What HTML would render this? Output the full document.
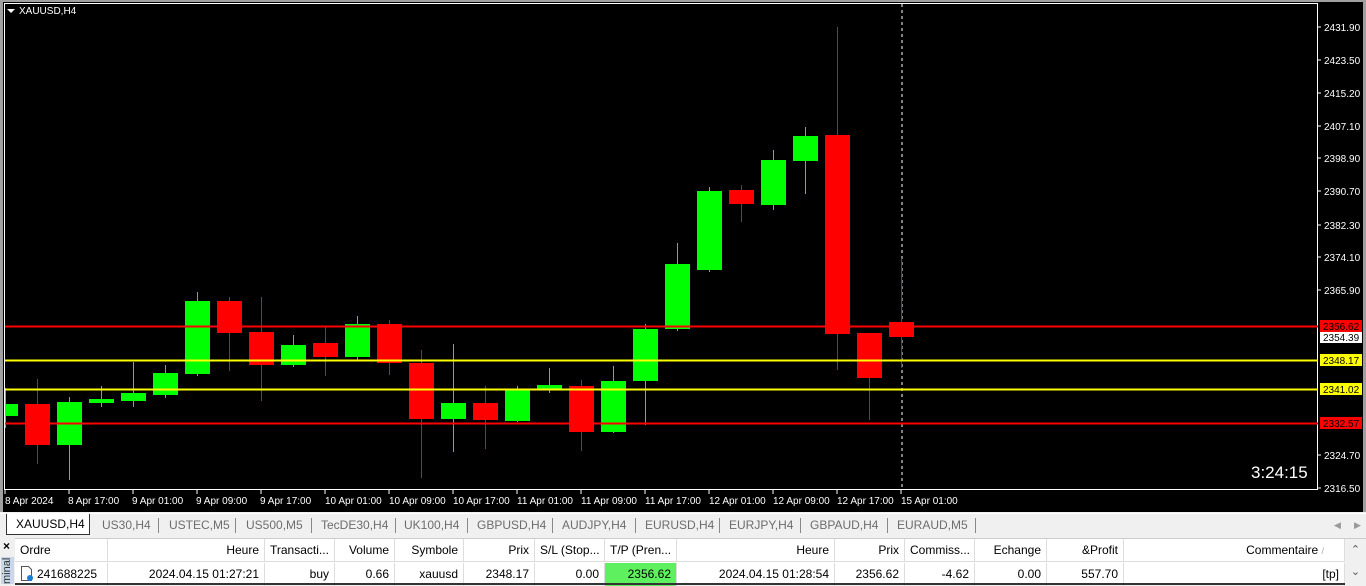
<!DOCTYPE html>
<html><head><meta charset="utf-8"><style>
*{margin:0;padding:0;box-sizing:border-box}
body{width:1366px;height:584px;overflow:hidden;background:#f0f0f0;font-family:"Liberation Sans",sans-serif;position:relative}
#chart{position:absolute;left:0;top:0;width:1366px;height:512px;background:#000;border-left:3px solid #a0a0a0;border-top:2px solid #a0a0a0;border-right:3px solid #a0a0a0}
svg text{font-family:"Liberation Sans",sans-serif}
#tabs{position:absolute;left:0;top:513px;width:1366px;height:24px;background:#f0f0f0;border-top:1px solid #fff;font-size:12px;color:#6d6d6d}
.tab{position:absolute;top:4px}
.sep{position:absolute;top:4px;width:1px;height:15px;background:#888}
#tbl{position:absolute;left:15px;top:538px;width:1351px;height:46px;background:#fff;border-top:1px solid #ccc;font-size:12px;color:#000}
.c{position:absolute;height:23px;line-height:23px;padding:0 5px;white-space:nowrap;overflow:hidden}
.h{top:0;border-right:1px solid #ddd;border-bottom:1px solid #ddd}
.r{top:24px;border-right:1px solid #ddd}
</style></head><body>
<div id="chart"></div>
<svg style="position:absolute;left:0;top:0" width="1366" height="512">
<rect x="4.5" y="3.5" width="1313" height="486" fill="none" stroke="#fff" stroke-width="1"/>
<polygon points="7,9 15,9 11,13" fill="#fff"/>
<text x="19" y="14" fill="#fff" font-size="10">XAUUSD,H4</text>
<g fill="#fff" font-size="10">
<text x="1324" y="31">2431.90</text><text x="1324" y="64">2423.50</text><text x="1324" y="97">2415.20</text><text x="1324" y="130">2407.10</text><text x="1324" y="162">2398.90</text><text x="1324" y="195">2390.70</text><text x="1324" y="229">2382.30</text><text x="1324" y="261">2374.10</text><text x="1324" y="294">2365.90</text><text x="1324" y="459">2324.70</text><text x="1324" y="492">2316.50</text>
</g>
<g stroke="#fff"><line x1="1318" y1="27" x2="1321" y2="27"/><line x1="1318" y1="60" x2="1321" y2="60"/><line x1="1318" y1="93" x2="1321" y2="93"/><line x1="1318" y1="126" x2="1321" y2="126"/><line x1="1318" y1="158" x2="1321" y2="158"/><line x1="1318" y1="191" x2="1321" y2="191"/><line x1="1318" y1="225" x2="1321" y2="225"/><line x1="1318" y1="257" x2="1321" y2="257"/><line x1="1318" y1="290" x2="1321" y2="290"/><line x1="1318" y1="455" x2="1321" y2="455"/><line x1="1318" y1="488" x2="1321" y2="488"/></g>
<line x1="902" y1="4" x2="902" y2="490" stroke="#fff" stroke-dasharray="3,3"/>
<g fill="#00ff00" stroke="#00ff00">
<line x1="5.5" y1="388" x2="5.5" y2="428"/><rect x="5" y="404" width="13" height="12" stroke="none"/>
<line x1="69.5" y1="397" x2="69.5" y2="480"/><rect x="57" y="402" width="25" height="43" stroke="none"/>
<line x1="101.5" y1="386" x2="101.5" y2="407"/><rect x="89" y="399" width="25" height="4" stroke="none"/>
<line x1="133.5" y1="362" x2="133.5" y2="407"/><rect x="121" y="393" width="25" height="8" stroke="none"/>
<line x1="165.5" y1="365" x2="165.5" y2="398"/><rect x="153" y="373" width="25" height="22" stroke="none"/>
<line x1="197.5" y1="292" x2="197.5" y2="376"/><rect x="185" y="301" width="25" height="73" stroke="none"/>
<line x1="293.5" y1="335" x2="293.5" y2="367"/><rect x="281" y="345" width="25" height="20" stroke="none"/>
<line x1="357.5" y1="316" x2="357.5" y2="360"/><rect x="345" y="324" width="25" height="33" stroke="none"/>
<line x1="453.5" y1="344" x2="453.5" y2="452"/><rect x="441" y="403" width="25" height="16" stroke="none"/>
<line x1="517.5" y1="386" x2="517.5" y2="422"/><rect x="505" y="389" width="25" height="32" stroke="none"/>
<line x1="549.5" y1="368" x2="549.5" y2="393"/><rect x="537" y="385" width="25" height="5" stroke="none"/>
<line x1="613.5" y1="366" x2="613.5" y2="433"/><rect x="601" y="381" width="25" height="51" stroke="none"/>
<line x1="645.5" y1="324" x2="645.5" y2="425"/><rect x="633" y="329" width="25" height="52" stroke="none"/>
<line x1="677.5" y1="243" x2="677.5" y2="331"/><rect x="665" y="264" width="25" height="65" stroke="none"/>
<line x1="709.5" y1="187" x2="709.5" y2="272"/><rect x="697" y="191" width="25" height="79" stroke="none"/>
<line x1="773.5" y1="150" x2="773.5" y2="210"/><rect x="761" y="160" width="25" height="45" stroke="none"/>
<line x1="805.5" y1="127" x2="805.5" y2="194"/><rect x="793" y="136" width="25" height="25" stroke="none"/>
</g>
<g fill="#ff0000" stroke="#ff0000">
<line x1="37.5" y1="379" x2="37.5" y2="464"/><rect x="25" y="404" width="25" height="41" stroke="none"/>
<line x1="229.5" y1="297" x2="229.5" y2="371"/><rect x="217" y="301" width="25" height="32" stroke="none"/>
<line x1="261.5" y1="297" x2="261.5" y2="401"/><rect x="249" y="332" width="25" height="33" stroke="none"/>
<line x1="325.5" y1="327" x2="325.5" y2="376"/><rect x="313" y="343" width="25" height="14" stroke="none"/>
<line x1="389.5" y1="320" x2="389.5" y2="375"/><rect x="377" y="324" width="25" height="39" stroke="none"/>
<line x1="421.5" y1="350" x2="421.5" y2="478"/><rect x="409" y="363" width="25" height="56" stroke="none"/>
<line x1="485.5" y1="386" x2="485.5" y2="449"/><rect x="473" y="403" width="25" height="17" stroke="none"/>
<line x1="581.5" y1="380" x2="581.5" y2="451"/><rect x="569" y="386" width="25" height="46" stroke="none"/>
<line x1="741.5" y1="185" x2="741.5" y2="222"/><rect x="729" y="190" width="25" height="14" stroke="none"/>
<line x1="837.5" y1="27" x2="837.5" y2="370"/><rect x="825" y="135" width="25" height="199" stroke="none"/>
<line x1="869.5" y1="333" x2="869.5" y2="420"/><rect x="857" y="333" width="25" height="45" stroke="none"/>
<line x1="901.5" y1="258" x2="901.5" y2="368"/><rect x="889" y="322" width="25" height="15" stroke="none"/>
</g>
<line x1="5" y1="326.5" x2="1318" y2="326.5" stroke="#ff0000" stroke-width="2"/>
<line x1="5" y1="360.5" x2="1318" y2="360.5" stroke="#ffff00" stroke-width="2"/>
<line x1="5" y1="389.5" x2="1318" y2="389.5" stroke="#ffff00" stroke-width="2"/>
<line x1="5" y1="423.5" x2="1318" y2="423.5" stroke="#ff0000" stroke-width="2"/>
<rect x="1320" y="320" width="42" height="12" fill="#ff0000"/><text x="1323" y="330" fill="#000" font-size="10">2356.62</text>
<rect x="1320" y="332" width="42" height="11" fill="#fff"/><text x="1323" y="341" fill="#000" font-size="10">2354.39</text>
<rect x="1320" y="354" width="42" height="12" fill="#ffff00"/><text x="1323" y="364" fill="#000" font-size="10">2348.17</text>
<rect x="1320" y="383" width="42" height="12" fill="#ffff00"/><text x="1323" y="393" fill="#000" font-size="10">2341.02</text>
<rect x="1320" y="417" width="42" height="12" fill="#ff0000"/><text x="1323" y="427" fill="#000" font-size="10">2332.57</text>
<text x="1251" y="478" fill="#fff" font-size="17">3:24:15</text>
<g fill="#fff" font-size="10">
<text x="5" y="504">8 Apr 2024</text><text x="68" y="504">8 Apr 17:00</text><text x="132" y="504">9 Apr 01:00</text><text x="196" y="504">9 Apr 09:00</text><text x="260" y="504">9 Apr 17:00</text><text x="325" y="504">10 Apr 01:00</text><text x="389" y="504">10 Apr 09:00</text><text x="453" y="504">10 Apr 17:00</text><text x="517" y="504">11 Apr 01:00</text><text x="581" y="504">11 Apr 09:00</text><text x="645" y="504">11 Apr 17:00</text><text x="709" y="504">12 Apr 01:00</text><text x="773" y="504">12 Apr 09:00</text><text x="837" y="504">12 Apr 17:00</text><text x="901" y="504">15 Apr 01:00</text>
</g>
<g stroke="#fff"><line x1="5" y1="490" x2="5" y2="494"/><line x1="69" y1="490" x2="69" y2="494"/><line x1="133" y1="490" x2="133" y2="494"/><line x1="197" y1="490" x2="197" y2="494"/><line x1="261" y1="490" x2="261" y2="494"/><line x1="325" y1="490" x2="325" y2="494"/><line x1="389" y1="490" x2="389" y2="494"/><line x1="453" y1="490" x2="453" y2="494"/><line x1="517" y1="490" x2="517" y2="494"/><line x1="581" y1="490" x2="581" y2="494"/><line x1="645" y1="490" x2="645" y2="494"/><line x1="709" y1="490" x2="709" y2="494"/><line x1="773" y1="490" x2="773" y2="494"/><line x1="837" y1="490" x2="837" y2="494"/><line x1="901" y1="490" x2="901" y2="494"/></g>
</svg>
<div id="tabs">
<div style="position:absolute;left:6px;top:0;width:84px;height:21px;background:#fff;border:1px solid #333;border-top:none;color:#000;padding:3px 0 0 9px">XAUUSD,H4</div>
<span class="tab" style="left:102px">US30,H4</span><span class="sep" style="left:158px"></span>
<span class="tab" style="left:169px">USTEC,M5</span><span class="sep" style="left:235px"></span>
<span class="tab" style="left:246px">US500,M5</span><span class="sep" style="left:311px"></span>
<span class="tab" style="left:321px">TecDE30,H4</span><span class="sep" style="left:395px"></span>
<span class="tab" style="left:404px">UK100,H4</span><span class="sep" style="left:467px"></span>
<span class="tab" style="left:477px">GBPUSD,H4</span><span class="sep" style="left:552px"></span>
<span class="tab" style="left:562px">AUDJPY,H4</span><span class="sep" style="left:635px"></span>
<span class="tab" style="left:645px">EURUSD,H4</span><span class="sep" style="left:719px"></span>
<span class="tab" style="left:729px">EURJPY,H4</span><span class="sep" style="left:800px"></span>
<span class="tab" style="left:810px">GBPAUD,H4</span><span class="sep" style="left:887px"></span>
<span class="tab" style="left:897px">EURAUD,M5</span><span class="sep" style="left:975px"></span>
<span class="tab" style="left:1334px;font-size:9px;color:#999;top:6px">◀</span><span class="tab" style="left:1354px;font-size:9px;color:#999;top:6px">▶</span>
</div>
<div style="position:absolute;left:0;top:537px;width:15px;height:47px;background:#f0f0f0">
<div style="position:absolute;left:3px;top:2px;font-size:12px;font-weight:bold">×</div>
<div style="position:absolute;left:1px;top:20px;width:13px;height:27px;background:#c8d8ea;font-size:11px;color:#333;writing-mode:vertical-rl;transform:rotate(180deg);line-height:13px">minal</div>
</div>
<div id="tbl">
<div class="c h" style="left:0;width:93px">Ordre</div>
<div class="c h" style="left:93px;width:157px;text-align:right">Heure</div>
<div class="c h" style="left:250px;width:70px">Transacti...</div>
<div class="c h" style="left:320px;width:60px;text-align:right">Volume</div>
<div class="c h" style="left:380px;width:69px;text-align:right">Symbole</div>
<div class="c h" style="left:449px;width:71px;text-align:right">Prix</div>
<div class="c h" style="left:520px;width:70px">S/L (Stop...</div>
<div class="c h" style="left:590px;width:72px">T/P (Pren...</div>
<div class="c h" style="left:662px;width:158px;text-align:right">Heure</div>
<div class="c h" style="left:820px;width:70px;text-align:right">Prix</div>
<div class="c h" style="left:890px;width:70px">Commiss...</div>
<div class="c h" style="left:960px;width:72px;text-align:right">Echange</div>
<div class="c h" style="left:1032px;width:77px;text-align:right">&amp;Profit</div>
<div class="c h" style="left:1109px;width:221px;text-align:right;padding-right:20px">Commentaire <span style="color:#aaa;font-size:9px">/</span></div>
<div class="c r" style="left:0;width:93px;padding-left:22px">241688225</div>
<svg style="position:absolute;left:5px;top:27px" width="14" height="16"><path d="M1.5 .5h7l3 3v11h-10z" fill="#fff" stroke="#555"/><circle cx="10" cy="12" r="3" fill="#1a7fd8"/></svg>
<div class="c r" style="left:93px;width:157px;text-align:right">2024.04.15 01:27:21</div>
<div class="c r" style="left:250px;width:70px;text-align:right">buy</div>
<div class="c r" style="left:320px;width:60px;text-align:right">0.66</div>
<div class="c r" style="left:380px;width:69px;text-align:right">xauusd</div>
<div class="c r" style="left:449px;width:71px;text-align:right">2348.17</div>
<div class="c r" style="left:520px;width:70px;text-align:right">0.00</div>
<div class="c r" style="left:590px;width:72px;text-align:right;background:#5ef05e">2356.62</div>
<div class="c r" style="left:662px;width:158px;text-align:right">2024.04.15 01:28:54</div>
<div class="c r" style="left:820px;width:70px;text-align:right">2356.62</div>
<div class="c r" style="left:890px;width:70px;text-align:right">-4.62</div>
<div class="c r" style="left:960px;width:72px;text-align:right">0.00</div>
<div class="c r" style="left:1032px;width:77px;text-align:right">557.70</div>
<div class="c r" style="left:1109px;width:221px;text-align:right">[tp]</div>
<div style="position:absolute;left:1330px;top:0;width:21px;height:46px;background:#f0f0f0;font-size:11px;color:#555;text-align:center;line-height:22px">⌃<br>⌄</div>
<div style="position:absolute;left:0;top:44px;width:1330px;height:2px;background:#333"></div>
</div>
</body></html>
